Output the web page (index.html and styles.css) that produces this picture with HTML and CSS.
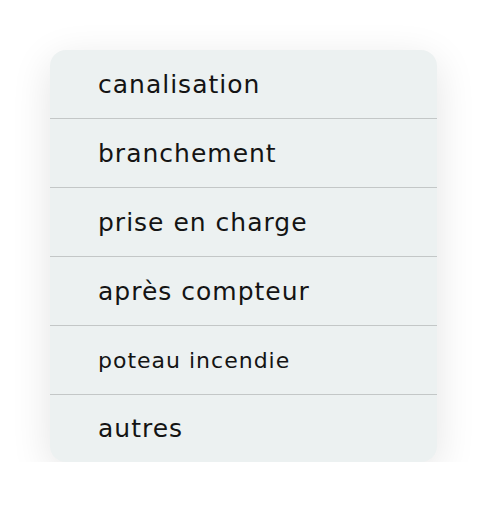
FILE: index.html
```html
<!DOCTYPE html>
<html lang="fr">
<head>
<meta charset="utf-8">
<link rel="stylesheet" href="styles.css">
</head>
<body>
<ul class="menu">
  <li class="item">canalisation</li>
  <li class="item">branchement</li>
  <li class="item">prise en charge</li>
  <li class="item">après compteur</li>
  <li class="item small">poteau incendie</li>
  <li class="item">autres</li>
</ul>
</body>
</html>
```

FILE: styles.css
```css
html, body {
  margin: 0;
  padding: 0;
  background: #ffffff;
}
body {
  padding: 50px 0 0 50px;
}
.menu {
  list-style: none;
  margin: 0;
  padding: 0;
  width: 387px;
  background: #ecf1f1;
  border-radius: 16px;
  box-shadow: 0 10px 40px rgba(0, 0, 0, 0.11);
  overflow: hidden;
}
.item {
  height: 69px;
  box-sizing: border-box;
  display: flex;
  align-items: center;
  padding-left: 48px;
  font-family: "DejaVu Sans", sans-serif;
  font-size: 25px;
  letter-spacing: 1px;
  color: #141414;
  border-bottom: 1px solid #c3c7c7;
}
.item:last-child {
  border-bottom: none;
  height: 67px;
}
.item.small {
  font-size: 22px;
  letter-spacing: 1px;
}
```
